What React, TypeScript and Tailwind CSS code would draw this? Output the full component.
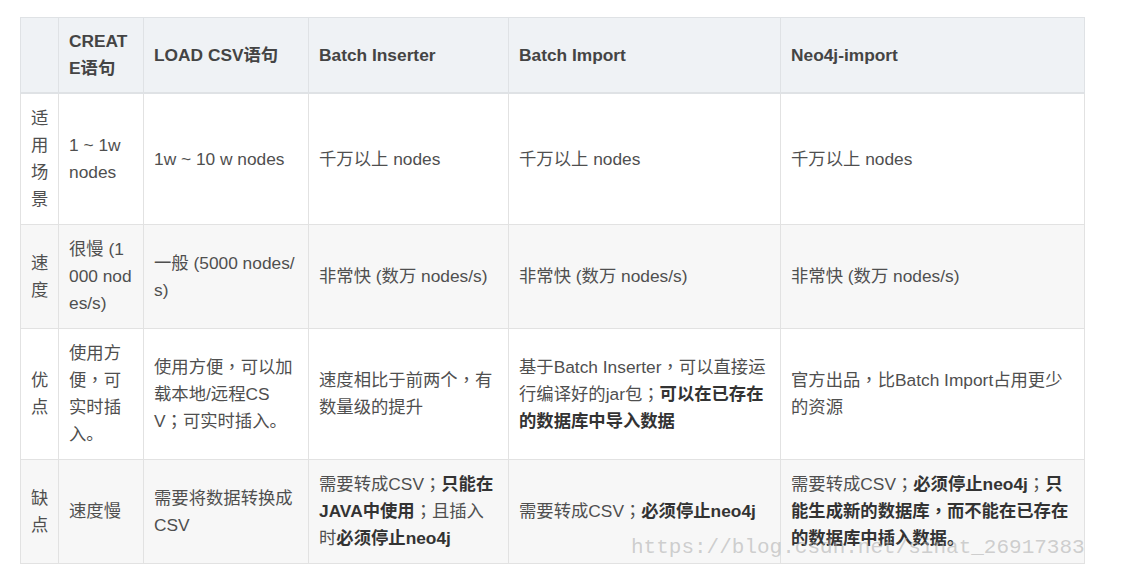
import type { ReactNode } from 'react'

// full-width ，and ； sit centred in the reference, as in the TC cut of Noto
function fmt(s: string): ReactNode {
  return s.split(/([，；])/).map((part, i) =>
    part === '，' || part === '；' ? (
      <span key={i} className="font-['Noto_Sans_CJK_TC',sans-serif] leading-none">
        {part}
      </span>
    ) : (
      part
    ),
  )
}

const B = ({ t }: { t: string }) => <b className="font-bold text-[#333]">{fmt(t)}</b>

type Row = { label: string; cells: ReactNode[]; shaded?: boolean }

const headers = ['CREATE语句', 'LOAD CSV语句', 'Batch Inserter', 'Batch Import', 'Neo4j-import']

const rows: Row[] = [
  {
    label: '适用场景',
    cells: ['1 ~ 1w nodes', '1w ~ 10 w nodes', '千万以上 nodes', '千万以上 nodes', '千万以上 nodes'],
  },
  {
    label: '速度',
    shaded: true,
    cells: [
      '很慢 (1000 nodes/s)',
      '一般 (5000 nodes/s)',
      '非常快 (数万 nodes/s)',
      '非常快 (数万 nodes/s)',
      '非常快 (数万 nodes/s)',
    ],
  },
  {
    label: '优点',
    cells: [
      fmt('使用方便，可实时插入。'),
      fmt('使用方便，可以加载本地/远程CSV；可实时插入。'),
      fmt('速度相比于前两个，有数量级的提升'),
      <>
        {fmt('基于Batch Inserter，可以直接运行编译好的jar包；')}
        <B t="可以在已存在的数据库中导入数据" />
      </>,
      fmt('官方出品，比Batch Import占用更少的资源'),
    ],
  },
  {
    label: '缺点',
    shaded: true,
    cells: [
      '速度慢',
      '需要将数据转换成CSV',
      <>
        {fmt('需要转成CSV；')}
        <B t="只能在JAVA中使用" />
        {fmt('；且插入时')}
        <B t="必须停止neo4j" />
      </>,
      <>
        {fmt('需要转成CSV；')}
        <B t="必须停止neo4j" />
      </>,
      <>
        {fmt('需要转成CSV；')}
        <B t="必须停止neo4j" />
        {fmt('；')}
        <B t="只能生成新的数据库，而不能在已存在的数据库中插入数据。" />
      </>,
    ],
  },
]

const widths = ['w-[38px]', 'w-[85px]', 'w-[165px]', 'w-[200px]', 'w-[272px]', 'w-[304px]']

export default function App() {
  return (
    <div className="relative h-[580px] w-[1135px] bg-white pl-[20px] pt-[17px] font-['Liberation_Sans','Noto_Sans_CJK_SC',sans-serif]">
      <table className="w-[1064px] table-fixed border-collapse text-[17.33px] leading-[27px] text-[#4f4f4f] [word-break:break-all]">
        <colgroup>
          {widths.map((w) => (
            <col key={w} className={w} />
          ))}
        </colgroup>
        <thead>
          <tr className="bg-[#eff2f5]">
            <th className="border border-b-2 border-[#dfe2e5]" />
            {headers.map((h) => (
              <th
                key={h}
                className="border border-b-2 border-[#dfe2e5] py-[10px] pl-[10px] pr-[11px] text-left align-middle font-bold text-[#444]"
              >
                {h}
              </th>
            ))}
          </tr>
        </thead>
        <tbody>
          {rows.map((r) => (
            <tr key={r.label} className={r.shaded ? 'bg-[#f7f7f7]' : 'bg-white'}>
              <td className="border border-[#e2e2e2] py-[11px] pl-[10px] pr-[11px] align-middle">{r.label}</td>
              {r.cells.map((c, i) => (
                <td key={i} className="border border-[#e2e2e2] py-[11px] pl-[10px] pr-[11px] align-middle">
                  {c}
                </td>
              ))}
            </tr>
          ))}
        </tbody>
      </table>
      <div className="pointer-events-none absolute left-[631px] top-[534px] font-['Liberation_Mono',monospace] text-[21px] leading-[28px] text-[rgba(170,170,170,0.55)]">
        https://blog.csdn.net/sinat_26917383
      </div>
    </div>
  )
}
